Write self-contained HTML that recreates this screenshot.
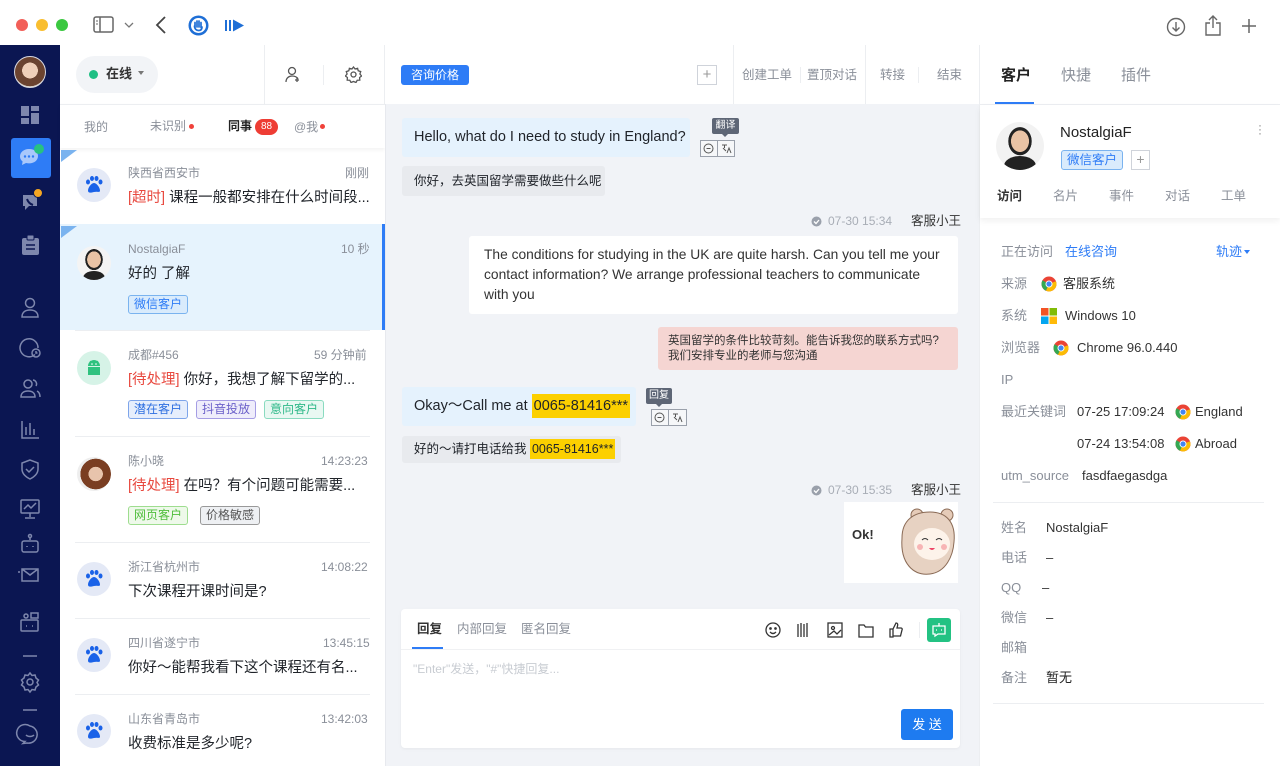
<!DOCTYPE html>
<html><head><meta charset="utf-8">
<style>
*{margin:0;padding:0;box-sizing:border-box}
body{width:1280px;height:766px;overflow:hidden;background:#fff;font-family:"Liberation Sans","Noto Sans CJK SC",sans-serif;color:#1f2329;position:relative;line-height:1.3}
.a{position:absolute;white-space:nowrap}
.g{color:#8a8f99}
.sb{position:absolute;left:0;top:45px;width:60px;height:721px;background:#0b1652}
.ic{position:absolute}
.tag{position:absolute;height:19px;font-size:12px;line-height:17px;padding:0 5px;border-radius:3px;border:1px solid}
.paw{position:absolute;width:34px;height:34px;border-radius:50%;background:#e4e9f6}
.div{position:absolute;height:1px;background:#eceef1}
.lbl{position:absolute;left:1001px;font-size:13px;color:#8a8f99;white-space:nowrap}
.val{position:absolute;font-size:13px;color:#333;white-space:nowrap}
</style></head><body>

<!-- title bar -->
<div class="a" style="left:16px;top:19px;width:12px;height:12px;border-radius:50%;background:#f25f58"></div>
<div class="a" style="left:36px;top:19px;width:12px;height:12px;border-radius:50%;background:#f9be2f"></div>
<div class="a" style="left:56px;top:19px;width:12px;height:12px;border-radius:50%;background:#3bc840"></div>
<svg class="ic" style="left:93px;top:16px" width="22" height="18"><rect x="1" y="1" width="19" height="15" rx="2" fill="none" stroke="#666" stroke-width="1.5"/><line x1="7" y1="1" x2="7" y2="16" stroke="#666" stroke-width="1.5"/><line x1="3" y1="5" x2="5" y2="5" stroke="#666"/><line x1="3" y1="8" x2="5" y2="8" stroke="#666"/></svg>
<svg class="ic" style="left:124px;top:22px" width="10" height="7"><path d="M1 1l4 4 4-4" fill="none" stroke="#777" stroke-width="1.3"/></svg>
<svg class="ic" style="left:155px;top:16px" width="12" height="18"><path d="M10 1L2 9l8 8" fill="none" stroke="#444" stroke-width="1.8"/></svg>
<svg class="ic" style="left:188px;top:15px" width="21" height="21"><circle cx="10.5" cy="10.5" r="10" fill="#1f6fd6"/><circle cx="10.5" cy="10.5" r="7.5" fill="#fff"/><path d="M7 13V7.5M9 12V6M11 12V6M13 12.5V7.5M6.5 11c0 3 2 4.5 4 4.5s3.5-1 3.5-3.5" stroke="#1f6fd6" stroke-width="1.7" fill="none" stroke-linecap="round"/></svg>
<svg class="ic" style="left:225px;top:19px" width="20" height="13"><rect x="0" y="1" width="2" height="11" fill="#1f6fd6"/><rect x="4" y="1" width="2" height="11" fill="#1f6fd6"/><path d="M8 0.5l11 6-11 6z" fill="#1f6fd6"/></svg>
<svg class="ic" style="left:1166px;top:17px" width="20" height="20"><circle cx="10" cy="10" r="8.5" fill="none" stroke="#666" stroke-width="1.4"/><path d="M10 5v9M6.5 10.5L10 14l3.5-3.5" fill="none" stroke="#666" stroke-width="1.4"/></svg>
<svg class="ic" style="left:1204px;top:14px" width="18" height="23"><path d="M9 2v12M5 6l4-4 4 4M6 9H2v12h14V9h-4" fill="none" stroke="#666" stroke-width="1.4"/></svg>
<svg class="ic" style="left:1241px;top:18px" width="16" height="16"><path d="M8 1v14M1 8h14" stroke="#666" stroke-width="1.5"/></svg>

<!-- sidebar -->
<div class="sb"></div>
<div class="a" style="left:14px;top:56px;width:32px;height:32px;border-radius:50%;background:radial-gradient(circle at 50% 45%,#f0cfb8 0 35%,#6b4330 36% 70%,#d9d0c6 71%);border:1.5px solid #d8d8e0"></div>
<svg class="ic" style="left:21px;top:106px" width="18" height="18"><rect x="0" y="0" width="8" height="10" fill="#7e87ad"/><rect x="10" y="0" width="8" height="5" fill="#7e87ad"/><rect x="0" y="12" width="8" height="6" fill="#7e87ad"/><rect x="10" y="7" width="8" height="11" fill="#7e87ad"/></svg>
<div class="a" style="left:11px;top:138px;width:40px;height:40px;border-radius:3px;background:#2e7cf6"></div>
<svg class="ic" style="left:18px;top:146px" width="26" height="24"><path d="M11 3C5.5 3 2 6.5 2 10.5c0 2 1 3.8 2.6 5L4 19l4-2c1 .3 2 .4 3 .4 5.5 0 9-3.4 9-7.4S16.5 3 11 3z" fill="#a9c8fb"/><circle cx="7" cy="10.5" r="1.2" fill="#2e7cf6"/><circle cx="11" cy="10.5" r="1.2" fill="#2e7cf6"/><circle cx="15" cy="10.5" r="1.2" fill="#2e7cf6"/></svg>
<div class="a" style="left:34px;top:144px;width:10px;height:10px;border-radius:50%;background:#27c281"></div>
<svg class="ic" style="left:20px;top:192px" width="22" height="22"><path d="M3 3h14v11H9l-4 4v-4H3z" fill="#7e87ad"/><path d="M7 7c1 3 3 5 6 6" stroke="#0b1652" stroke-width="2" fill="none"/></svg>
<div class="a" style="left:33px;top:188px;width:10px;height:10px;border-radius:50%;background:#f5a623;border:1px solid #0b1652"></div>
<svg class="ic" style="left:22px;top:235px" width="17" height="20"><rect x="0" y="3" width="17" height="17" rx="2" fill="#7e87ad"/><rect x="5" y="0" width="7" height="5" rx="1" fill="#7e87ad" stroke="#0b1652"/><path d="M4 10h9M4 14h9" stroke="#0b1652" stroke-width="1.5"/></svg>
<svg class="ic" style="left:0;top:290px" width="60" height="470" fill="none" stroke="#7e87ad" stroke-width="1.5">
<circle cx="30" cy="13" r="4.5"/><path d="M22 27c0-5 3.5-7 8-7s8 2 8 7z"/>
<path d="M38 58a9 9 0 1 0-3 6.5"/><circle cx="36" cy="63" r="4"/><path d="M36 61v2h1.5"/>
<circle cx="28" cy="94" r="4"/><path d="M21 107c0-4 3-6 7-6s7 2 7 6zM33 90a4 4 0 0 1 3 6M37 101c2 1 3 3 3 6"/>
<path d="M22 131v17h17M26 145v-8M30 145v-12M34 145v-6"/>
<path d="M30 170l-8 3v6c0 5 4 8 8 10 4-2 8-5 8-10v-6z"/><path d="M26 179l3 3 5-5"/>
<rect x="21" y="210" width="18" height="13" rx="1"/><path d="M30 223v4M25 228h10M24 219l4-4 3 3 5-5"/>
<path d="M30 247v3"/><circle cx="30" cy="246" r="1.5"/><rect x="22" y="251" width="16" height="11" rx="2"/><path d="M27 256v1M33 256v1"/>
<path d="M22 291h16v-12H22zM22 279l8 6 8-6"/><path d="M20 282h-2"/>
<rect x="21" y="330" width="17" height="11" rx="1"/><circle cx="26" cy="326" r="2"/><path d="M31 323h7v5h-7zM26 336h1M32 336h1"/>
<path d="M23 366h14"/>
<circle cx="30" cy="392" r="3"/><path d="M30 383l2 2.5 3-.5 1 3 2.5 2-1.5 2.5 1.5 2.5-2.5 2-1 3-3-.5-2 2.5-2-2.5-3 .5-1-3-2.5-2 1.5-2.5-1.5-2.5 2.5-2 1-3 3 .5z"/>
<path d="M23 420h14"/>
<path d="M30 436a8.5 8.5 0 1 0-5 15.5l-2 2 4-.5a8.5 8.5 0 1 0 3-17z"/><path d="M26 445c2 2 6 2 8 0"/>
</svg>

<!-- conversation list column -->
<div class="a" style="left:76px;top:56px;width:82px;height:37px;border-radius:19px;background:#f2f4f7"></div>
<div class="a" style="left:89px;top:70px;width:9px;height:9px;border-radius:50%;background:#1fbf84"></div>
<div class="a" style="left:106px;top:66px;font-size:13px;font-weight:bold;color:#333">在线</div>
<div class="a" style="left:138px;top:71px;width:0;height:0;border-left:3px solid transparent;border-right:3px solid transparent;border-top:4px solid #777"></div>
<div class="a" style="left:264px;top:45px;width:1px;height:59px;background:#eceef1"></div>
<div class="a" style="left:384px;top:45px;width:1px;height:59px;background:#eceef1"></div>
<div class="a" style="left:323px;top:65px;width:1px;height:20px;background:#eceef1"></div>
<svg class="ic" style="left:285px;top:66px" width="16" height="17" fill="none" stroke="#555" stroke-width="1.3"><circle cx="7" cy="5" r="3.5"/><path d="M1 16c0-4 3-6 6-6s5 1 6 3M12 12v4M10 14h4"/></svg>
<svg class="ic" style="left:345px;top:66px" width="17" height="17" fill="none" stroke="#555" stroke-width="1.3"><circle cx="8.5" cy="8.5" r="2.5"/><path d="M8.5 1l1.6 2 2.5-.7.6 2.5 2.5.8-.8 2.4 1.7 2-2 1.5.2 2.6-2.6.1-1.2 2.3-2.5-1-2.5 1-1.2-2.3-2.6-.1.2-2.6-2-1.5 1.7-2-.8-2.4 2.5-.8.6-2.5 2.5.7z"/></svg>
<div class="a" style="left:60px;top:104px;width:325px;height:44px;background:#fff;box-shadow:0 2px 4px rgba(0,0,0,.05)"></div>
<div class="a" style="left:60px;top:104px;width:325px;height:1px;background:#eceef1"></div>
<div class="a g" style="left:84px;top:120px;font-size:12px">我的</div>
<div class="a g" style="left:150px;top:119px;font-size:12px">未识别</div>
<div class="a" style="left:189px;top:124px;width:5px;height:5px;border-radius:50%;background:#f0413a"></div>
<div class="a" style="left:228px;top:119px;font-size:12px;font-weight:bold;color:#222">同事</div>
<div class="a" style="left:255px;top:119px;width:23px;height:16px;border-radius:8px;background:#ee3d34;color:#fff;font-size:10px;line-height:16px;text-align:center">88</div>
<div class="a g" style="left:294px;top:120px;font-size:12px">@我</div>
<div class="a" style="left:320px;top:124px;width:5px;height:5px;border-radius:50%;background:#f0413a"></div>
<div class="a" style="left:385px;top:104px;width:1px;height:662px;background:#e7e9ee"></div>

<!-- items -->
<svg class="ic" style="left:61px;top:150px" width="16" height="13"><path d="M0 0h16L0 12z" fill="#7ab3ef"/></svg>
<div class="paw" style="left:77px;top:168px"></div>
<svg class="ic" style="left:84px;top:175px" width="20" height="20" fill="#1a62e8"><ellipse cx="4" cy="7" rx="2" ry="2.5"/><ellipse cx="8" cy="3.5" rx="2" ry="2.5"/><ellipse cx="12.5" cy="3.5" rx="2" ry="2.5"/><ellipse cx="16.5" cy="7" rx="2" ry="2.5"/><path d="M10 8c-3 0-6 5-6 7.5S6 18 10 17s6 1 6-1.5S13 8 10 8z"/></svg>
<div class="a g" style="left:128px;top:166px;font-size:12px">陕西省西安市</div>
<div class="a g" style="left:345px;top:166px;font-size:12px">刚刚</div>
<div class="a" style="left:128px;top:189px;font-size:14.5px"><span style="color:#e8493f">[超时]</span> 课程一般都安排在什么时间段...</div>

<div class="a" style="left:60px;top:224px;width:325px;height:106px;background:#e6f3fd"></div>
<div class="a" style="left:382px;top:224px;width:3px;height:106px;background:#2e7cf6"></div>
<svg class="ic" style="left:61px;top:226px" width="16" height="13"><path d="M0 0h16L0 12z" fill="#7ab3ef"/></svg>
<div class="a" style="left:77px;top:246px;width:34px;height:34px;border-radius:50%;background:radial-gradient(ellipse at 50% 40%,#e9c3a5 0 28%,#222 29% 36%,#f4f4f4 37%);overflow:hidden"><div style="position:absolute;left:6px;top:25px;width:22px;height:14px;border-radius:50% 50% 0 0;background:#222"></div></div>
<div class="a g" style="left:128px;top:242px;font-size:12px">NostalgiaF</div>
<div class="a g" style="left:341px;top:242px;font-size:12px">10 秒</div>
<div class="a" style="left:128px;top:265px;font-size:14.5px">好的 了解</div>
<div class="tag" style="left:128px;top:295px;color:#2e7cf6;border-color:#7ab3ef;background:#d9ebfc">微信客户</div>

<div class="div" style="left:75px;top:330px;width:295px"></div>
<div class="a" style="left:77px;top:351px;width:34px;height:34px;border-radius:50%;background:#d6f3e7"></div>
<svg class="ic" style="left:85px;top:358px" width="18" height="18"><path d="M3 8a6 6 0 0 1 12 0z" fill="#2fc27f"/><rect x="3" y="9" width="12" height="8" fill="#2fc27f"/><path d="M5 3l2 2M13 3l-2 2" stroke="#2fc27f"/><circle cx="7" cy="6" r=".8" fill="#fff"/><circle cx="11" cy="6" r=".8" fill="#fff"/></svg>
<div class="a g" style="left:128px;top:348px;font-size:12px">成都#456</div>
<div class="a g" style="left:314px;top:348px;font-size:12px">59 分钟前</div>
<div class="a" style="left:128px;top:371px;font-size:14.5px"><span style="color:#e8493f">[待处理]</span> 你好，我想了解下留学的...</div>
<div class="tag" style="left:128px;top:400px;color:#2e6fe0;border-color:#7ea5ea;background:#e6eefc">潜在客户</div>
<div class="tag" style="left:196px;top:400px;color:#6a5fc9;border-color:#a59de4;background:#efedfb">抖音投放</div>
<div class="tag" style="left:264px;top:400px;color:#2fb889;border-color:#8adbc0;background:#e9f8f2">意向客户</div>

<div class="div" style="left:75px;top:436px;width:295px"></div>
<div class="a" style="left:77px;top:457px;width:34px;height:34px;border-radius:50%;background:radial-gradient(circle at 55% 50%,#e8c4ac 0 28%,#7a3e22 29% 60%,#eee 61%)"></div>
<div class="a g" style="left:128px;top:454px;font-size:12px">陈小晓</div>
<div class="a g" style="left:321px;top:454px;font-size:12px">14:23:23</div>
<div class="a" style="left:128px;top:477px;font-size:14.5px"><span style="color:#e8493f">[待处理]</span> 在吗？有个问题可能需要...</div>
<div class="tag" style="left:128px;top:506px;color:#4fbe3c;border-color:#9edd8f;background:#eef9ea">网页客户</div>
<div class="tag" style="left:200px;top:506px;color:#555;border-color:#999;background:#eef0f3">价格敏感</div>

<div class="div" style="left:75px;top:542px;width:295px"></div>
<div class="paw" style="left:77px;top:562px"></div>
<svg class="ic" style="left:84px;top:569px" width="20" height="20" fill="#1a62e8"><ellipse cx="4" cy="7" rx="2" ry="2.5"/><ellipse cx="8" cy="3.5" rx="2" ry="2.5"/><ellipse cx="12.5" cy="3.5" rx="2" ry="2.5"/><ellipse cx="16.5" cy="7" rx="2" ry="2.5"/><path d="M10 8c-3 0-6 5-6 7.5S6 18 10 17s6 1 6-1.5S13 8 10 8z"/></svg>
<div class="a g" style="left:128px;top:560px;font-size:12px">浙江省杭州市</div>
<div class="a g" style="left:321px;top:560px;font-size:12px">14:08:22</div>
<div class="a" style="left:128px;top:583px;font-size:14.5px">下次课程开课时间是?</div>

<div class="div" style="left:75px;top:618px;width:295px"></div>
<div class="paw" style="left:77px;top:638px"></div>
<svg class="ic" style="left:84px;top:645px" width="20" height="20" fill="#1a62e8"><ellipse cx="4" cy="7" rx="2" ry="2.5"/><ellipse cx="8" cy="3.5" rx="2" ry="2.5"/><ellipse cx="12.5" cy="3.5" rx="2" ry="2.5"/><ellipse cx="16.5" cy="7" rx="2" ry="2.5"/><path d="M10 8c-3 0-6 5-6 7.5S6 18 10 17s6 1 6-1.5S13 8 10 8z"/></svg>
<div class="a g" style="left:128px;top:636px;font-size:12px">四川省遂宁市</div>
<div class="a g" style="left:323px;top:636px;font-size:12px">13:45:15</div>
<div class="a" style="left:128px;top:659px;font-size:14.5px">你好～能帮我看下这个课程还有名...</div>

<div class="div" style="left:75px;top:694px;width:295px"></div>
<div class="paw" style="left:77px;top:714px"></div>
<svg class="ic" style="left:84px;top:721px" width="20" height="20" fill="#1a62e8"><ellipse cx="4" cy="7" rx="2" ry="2.5"/><ellipse cx="8" cy="3.5" rx="2" ry="2.5"/><ellipse cx="12.5" cy="3.5" rx="2" ry="2.5"/><ellipse cx="16.5" cy="7" rx="2" ry="2.5"/><path d="M10 8c-3 0-6 5-6 7.5S6 18 10 17s6 1 6-1.5S13 8 10 8z"/></svg>
<div class="a g" style="left:128px;top:712px;font-size:12px">山东省青岛市</div>
<div class="a g" style="left:321px;top:712px;font-size:12px">13:42:03</div>
<div class="a" style="left:128px;top:735px;font-size:14.5px">收费标准是多少呢?</div>

<!-- chat header -->
<div class="a" style="left:401px;top:65px;width:68px;height:20px;border-radius:3px;background:#2e7cf6;color:#fff;font-size:12px;line-height:20px;text-align:center">咨询价格</div>
<div class="a" style="left:697px;top:65px;width:20px;height:20px;border:1px solid #cfd3da;color:#999;font-size:15px;line-height:17px;text-align:center">+</div>
<div class="a" style="left:733px;top:45px;width:1px;height:59px;background:#eceef1"></div>
<div class="a" style="left:865px;top:45px;width:1px;height:59px;background:#eceef1"></div>
<div class="a" style="left:979px;top:45px;width:1px;height:721px;background:#eceef1"></div>
<div class="a g" style="left:742px;top:67px;font-size:12.5px">创建工单</div>
<div class="a" style="left:800px;top:67px;width:1px;height:16px;background:#eceef1"></div>
<div class="a g" style="left:807px;top:67px;font-size:12.5px">置顶对话</div>
<div class="a g" style="left:880px;top:67px;font-size:12.5px">转接</div>
<div class="a" style="left:918px;top:67px;width:1px;height:16px;background:#eceef1"></div>
<div class="a g" style="left:937px;top:67px;font-size:12.5px">结束</div>

<!-- chat body -->
<div class="a" style="left:386px;top:104px;width:593px;height:662px;background:#f1f3f7"></div>
<div class="a" style="left:402px;top:118px;width:288px;height:39px;border-radius:3px;background:#e5f2fd;font-size:14.5px;line-height:39px;padding-left:12px">Hello, what do I need to study in England?</div>
<div class="a" style="left:712px;top:118px;width:27px;height:16px;border-radius:2px;background:#5e6676;color:#fff;font-size:10px;line-height:16px;text-align:center">翻译</div>
<div class="a" style="left:722px;top:134px;border-left:3px solid transparent;border-right:3px solid transparent;border-top:3px solid #5e6676"></div>
<div class="a" style="left:700px;top:140px;width:35px;height:17px;border:1px solid #9aa0ab;background:#f6f7f9"></div>
<div class="a" style="left:717px;top:140px;width:1px;height:17px;background:#9aa0ab"></div>
<svg class="ic" style="left:702px;top:142px" width="33" height="13" fill="none" stroke="#555" stroke-width="1"><circle cx="6.5" cy="6.5" r="4.5"/><path d="M4.5 6.5h4M20 3h5M22.5 3v3M21 6l3 3M25 11l2-5 2 5"/></svg>
<div class="a" style="left:402px;top:166px;width:203px;height:30px;border-radius:3px;background:#e8eaee;font-size:12.5px;line-height:30px;padding-left:12px">你好，去英国留学需要做些什么呢</div>

<svg class="ic" style="left:811px;top:216px" width="11" height="11"><circle cx="5.5" cy="5.5" r="5" fill="#9aa0ab"/><path d="M3 5.5l2 2 3-3.5" stroke="#fff" fill="none" stroke-width="1.3"/></svg>
<div class="a" style="left:828px;top:214px;font-size:12px;color:#a8adb6">07-30 15:34</div>
<div class="a" style="left:911px;top:213px;font-size:12.5px;color:#333">客服小王</div>
<div class="a" style="left:469px;top:236px;width:489px;height:78px;border-radius:3px;background:#fff;font-size:13.8px;line-height:20px;padding:9px 15px;white-space:normal;color:#333">The conditions for studying in the UK are quite harsh. Can you tell me your contact information? We arrange professional teachers to communicate with you</div>
<div class="a" style="left:658px;top:327px;width:300px;height:43px;border-radius:3px;background:#f5d5d2;font-size:11.5px;line-height:15px;padding:7px 10px;white-space:normal;color:#333">英国留学的条件比较苛刻。能告诉我您的联系方式吗?我们安排专业的老师与您沟通</div>

<div class="a" style="left:402px;top:387px;width:234px;height:39px;border-radius:3px;background:#e5f2fd;font-size:14.5px;line-height:39px;padding-left:12px">Okay～Call me at <span style="background:#fcd000;display:inline-block;line-height:24px;padding:0 2px">0065-81416***</span></div>
<div class="a" style="left:646px;top:388px;width:26px;height:16px;border-radius:2px;background:#5e6676;color:#fff;font-size:10px;line-height:16px;text-align:center">回复</div>
<div class="a" style="left:656px;top:404px;border-left:3px solid transparent;border-right:3px solid transparent;border-top:3px solid #5e6676"></div>
<div class="a" style="left:651px;top:409px;width:36px;height:17px;border:1px solid #9aa0ab;background:#f6f7f9"></div>
<div class="a" style="left:668px;top:409px;width:1px;height:17px;background:#9aa0ab"></div>
<svg class="ic" style="left:653px;top:411px" width="33" height="13" fill="none" stroke="#555" stroke-width="1"><circle cx="6.5" cy="6.5" r="4.5"/><path d="M4.5 6.5h4M20 3h5M22.5 3v3M21 6l3 3M25 11l2-5 2 5"/></svg>
<div class="a" style="left:402px;top:436px;width:219px;height:27px;border-radius:3px;background:#e8eaee;font-size:12.5px;line-height:27px;padding-left:12px">好的～请打电话给我 <span style="background:#fcd000;display:inline-block;line-height:20px;padding:0 2px">0065-81416***</span></div>

<svg class="ic" style="left:811px;top:485px" width="11" height="11"><circle cx="5.5" cy="5.5" r="5" fill="#9aa0ab"/><path d="M3 5.5l2 2 3-3.5" stroke="#fff" fill="none" stroke-width="1.3"/></svg>
<div class="a" style="left:828px;top:483px;font-size:12px;color:#a8adb6">07-30 15:35</div>
<div class="a" style="left:911px;top:482px;font-size:12.5px;color:#333">客服小王</div>
<div class="a" style="left:844px;top:502px;width:114px;height:81px;background:#fff"></div>
<svg class="ic" style="left:844px;top:502px" width="114" height="81"><text x="8" y="37" font-family="Liberation Sans" font-weight="bold" font-size="13" fill="#333">Ok!</text><circle cx="73" cy="13" r="6" fill="#e5cbb8" stroke="#8a6a55"/><circle cx="103" cy="13" r="6" fill="#e5cbb8" stroke="#8a6a55"/><path d="M58 36c0-18 12-26 28-26s26 10 24 30c-1 14-8 30-24 32s-30-10-28-36z" fill="#e7d2c2" stroke="#8a6a55"/><ellipse cx="88" cy="42" rx="18" ry="16" fill="#fdf3ea"/><path d="M78 38q3-3 6 0M92 38q3-3 6 0" stroke="#333" fill="none"/><path d="M85 46q3 4 6 0z" fill="#e46"/><circle cx="76" cy="45" r="3" fill="#f7b5b5"/><circle cx="100" cy="45" r="3" fill="#f7b5b5"/></svg>

<!-- input -->
<div class="a" style="left:401px;top:609px;width:559px;height:139px;border-radius:4px;background:#fff;box-shadow:0 1px 3px rgba(0,0,0,.05)"></div>
<div class="a" style="left:417px;top:621px;font-size:12.5px;font-weight:bold;color:#333">回复</div>
<div class="a g" style="left:457px;top:621px;font-size:12.5px">内部回复</div>
<div class="a g" style="left:521px;top:621px;font-size:12.5px">匿名回复</div>
<div class="a" style="left:412px;top:647px;width:31px;height:2px;background:#2e7cf6"></div>
<div class="a" style="left:401px;top:649px;width:559px;height:1px;background:#f0f1f3"></div>
<svg class="ic" style="left:763px;top:620px" width="150" height="20" fill="none" stroke="#333" stroke-width="1.3"><circle cx="10" cy="10" r="7"/><circle cx="7.5" cy="8.5" r=".7" fill="#333"/><circle cx="12.5" cy="8.5" r=".7" fill="#333"/><path d="M7 12q3 3 6 0"/><path d="M35 4v13M38 3v14M41 4v13M44 3v14"/><rect x="65" y="3" width="14" height="14"/><circle cx="70" cy="8" r="1.5"/><path d="M66 15l5-4 3 3 4-4"/><path d="M96 5h5l1.5 2H110v10H96z"/><path d="M127 9h3v8h-3zM130 9l3-6c1.5 0 2 1 1.5 3l-.5 2h4c1 0 1.5 1 1 2l-1.5 6h-7.5"/></svg>
<div class="a" style="left:919px;top:622px;width:1px;height:16px;background:#eceef1"></div>
<div class="a" style="left:927px;top:618px;width:24px;height:24px;border-radius:3px;background:#23c283"></div>
<svg class="ic" style="left:930px;top:621px" width="18" height="18" fill="none" stroke="#fff" stroke-width="1.3"><path d="M3 5h12v8H8l-3 2v-2H3z"/><path d="M6 9h1M11 9h1M9 2v3"/></svg>
<div class="a" style="left:413px;top:662px;font-size:12px;color:#c8ccd2">"Enter"发送，"#"快捷回复...</div>
<div class="a" style="left:901px;top:709px;width:52px;height:31px;border-radius:3px;background:#1e7bf0;color:#fff;font-size:13px;line-height:31px;text-align:center">发 送</div>

<!-- right panel -->
<div class="a" style="left:1001px;top:66px;font-size:15px;font-weight:bold;color:#222">客户</div>
<div class="a g" style="left:1061px;top:66px;font-size:15px">快捷</div>
<div class="a g" style="left:1121px;top:66px;font-size:15px">插件</div>
<div class="a" style="left:995px;top:102px;width:39px;height:2px;background:#2e7cf6"></div>
<div class="a" style="left:980px;top:104px;width:300px;height:1px;background:#eceef1"></div>
<div class="a" style="left:980px;top:105px;width:300px;height:113px;background:#fff;box-shadow:0 3px 6px rgba(0,0,0,.06)"></div>
<div class="a" style="left:996px;top:122px;width:48px;height:48px;border-radius:50%;background:radial-gradient(ellipse at 50% 40%,#e9c3a5 0 26%,#222 27% 34%,#f2f2f2 35%);overflow:hidden"><div style="position:absolute;left:8px;top:34px;width:32px;height:20px;border-radius:50% 50% 0 0;background:#222"></div></div>
<div class="a" style="left:1060px;top:123px;font-size:15px;color:#222">NostalgiaF</div>
<div class="tag" style="left:1061px;top:150px;height:20px;font-size:12.5px;line-height:18px;color:#2e7cf6;border-color:#7ab3ef;background:#d9ebfc">微信客户</div>
<div class="a" style="left:1131px;top:150px;width:19px;height:20px;border:1px solid #cfd3da;color:#999;font-size:14px;line-height:17px;text-align:center">+</div>
<div class="a" style="left:1258px;top:123px;font-size:12px;color:#888;line-height:4px">·<br>·<br>·</div>
<div class="a" style="left:997px;top:188px;font-size:12.5px;font-weight:bold;color:#333">访问</div>
<div class="a g" style="left:1053px;top:188px;font-size:12.5px">名片</div>
<div class="a g" style="left:1109px;top:188px;font-size:12.5px">事件</div>
<div class="a g" style="left:1165px;top:188px;font-size:12.5px">对话</div>
<div class="a g" style="left:1221px;top:188px;font-size:12.5px">工单</div>

<div class="lbl" style="top:244px">正在访问</div><div class="val" style="left:1065px;top:244px;color:#2e7cf6">在线咨询</div>
<div class="val" style="left:1216px;top:244px;color:#2e7cf6">轨迹</div>
<div class="a" style="left:1244px;top:250px;border-left:3px solid transparent;border-right:3px solid transparent;border-top:4px solid #2e7cf6"></div>
<div class="lbl" style="top:276px">来源</div>
<div class="lbl" style="top:308px">系统</div>
<div class="lbl" style="top:340px">浏览器</div>
<div class="lbl" style="top:372px">IP</div>
<div class="lbl" style="top:404px">最近关键词</div>
<div class="lbl" style="top:468px">utm_source</div>
<svg class="ic" style="left:1041px;top:276px" width="16" height="16"><circle cx="8" cy="8" r="7.5" fill="#ea4335"/><path d="M8 8L1.5 4.2A7.5 7.5 0 0 0 5 14.8z" fill="#34a853"/><path d="M8 8l6.9-2.8A7.5 7.5 0 0 1 5 14.8z" fill="#fbbc05"/><circle cx="8" cy="8" r="3.5" fill="#fff"/><circle cx="8" cy="8" r="2.6" fill="#4285f4"/></svg>
<div class="val" style="left:1063px;top:276px">客服系统</div>
<svg class="ic" style="left:1041px;top:308px" width="16" height="16"><rect x="0" y="0" width="7.5" height="7.5" fill="#f35325"/><rect x="8.5" y="0" width="7.5" height="7.5" fill="#81bc06"/><rect x="0" y="8.5" width="7.5" height="7.5" fill="#05a6f0"/><rect x="8.5" y="8.5" width="7.5" height="7.5" fill="#ffba08"/></svg>
<div class="val" style="left:1065px;top:308px">Windows 10</div>
<svg class="ic" style="left:1053px;top:340px" width="16" height="16"><circle cx="8" cy="8" r="7.5" fill="#ea4335"/><path d="M8 8L1.5 4.2A7.5 7.5 0 0 0 5 14.8z" fill="#34a853"/><path d="M8 8l6.9-2.8A7.5 7.5 0 0 1 5 14.8z" fill="#fbbc05"/><circle cx="8" cy="8" r="3.5" fill="#fff"/><circle cx="8" cy="8" r="2.6" fill="#4285f4"/></svg>
<div class="val" style="left:1077px;top:340px">Chrome 96.0.440</div>
<div class="val" style="left:1077px;top:404px">07-25 17:09:24</div>
<svg class="ic" style="left:1175px;top:404px" width="16" height="16"><circle cx="8" cy="8" r="7.5" fill="#ea4335"/><path d="M8 8L1.5 4.2A7.5 7.5 0 0 0 5 14.8z" fill="#34a853"/><path d="M8 8l6.9-2.8A7.5 7.5 0 0 1 5 14.8z" fill="#fbbc05"/><circle cx="8" cy="8" r="3.5" fill="#fff"/><circle cx="8" cy="8" r="2.6" fill="#4285f4"/></svg>
<div class="val" style="left:1195px;top:404px">England</div>
<div class="val" style="left:1077px;top:436px">07-24 13:54:08</div>
<svg class="ic" style="left:1175px;top:436px" width="16" height="16"><circle cx="8" cy="8" r="7.5" fill="#ea4335"/><path d="M8 8L1.5 4.2A7.5 7.5 0 0 0 5 14.8z" fill="#34a853"/><path d="M8 8l6.9-2.8A7.5 7.5 0 0 1 5 14.8z" fill="#fbbc05"/><circle cx="8" cy="8" r="3.5" fill="#fff"/><circle cx="8" cy="8" r="2.6" fill="#4285f4"/></svg>
<div class="val" style="left:1195px;top:436px">Abroad</div>
<div class="val" style="left:1082px;top:468px">fasdfaegasdga</div>
<div class="div" style="left:993px;top:502px;width:271px"></div>

<div class="lbl" style="top:520px">姓名</div><div class="val" style="left:1046px;top:520px">NostalgiaF</div>
<div class="lbl" style="top:550px">电话</div><div class="val" style="left:1046px;top:550px">–</div>
<div class="lbl" style="top:580px">QQ</div><div class="val" style="left:1042px;top:580px">–</div>
<div class="lbl" style="top:610px">微信</div><div class="val" style="left:1046px;top:610px">–</div>
<div class="lbl" style="top:640px">邮箱</div>
<div class="lbl" style="top:670px">备注</div><div class="val" style="left:1046px;top:670px;color:#222">暂无</div>
<div class="div" style="left:993px;top:703px;width:271px"></div>
</body></html>
